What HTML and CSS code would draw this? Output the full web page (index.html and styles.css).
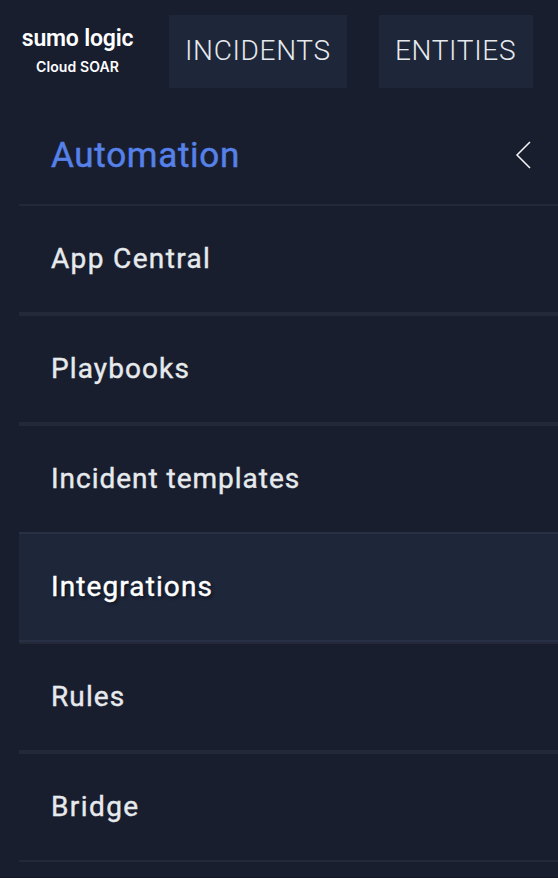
FILE: index.html
```html
<!DOCTYPE html>
<html lang="en">
<head>
<meta charset="utf-8">
<title>Cloud SOAR</title>
<link rel="stylesheet" href="styles.css">
</head>
<body>
<header class="topbar">
  <div class="brand"><span class="brand-name">sumo logic</span><span class="brand-product">Cloud SOAR</span></div>
  <nav class="tabs"><a class="tab tab-incidents">INCIDENTS</a><a class="tab tab-entities">ENTITIES</a></nav>
</header>
<main class="menu">
  <div class="menu-header">
    <h1 class="menu-title">Automation</h1>
    <svg class="back" viewBox="0 0 18 28" aria-hidden="true"><path d="M16 1 3 14 16 27"/></svg>
  </div>
  <ul class="items">
    <li class="item"><span class="label app-central">App Central</span></li>
    <li class="item"><span class="label playbooks">Playbooks</span></li>
    <li class="item"><span class="label templates">Incident templates</span></li>
    <li class="item active"><span class="label integrations">Integrations</span></li>
    <li class="item"><span class="label rules">Rules</span></li>
    <li class="item"><span class="label bridge">Bridge</span></li>
  </ul>
</main>
</body>
</html>
```
FILE: styles.css
```css
* { box-sizing: border-box; }
body { margin: 0; height: 878px; overflow: hidden; background: #191e2f; color: #e6eaed; font-family: Roboto, "Liberation Sans", sans-serif; border-bottom: 1px solid #151827; }
.topbar { display: flex; align-items: flex-start; height: 109px; padding: 15px 25px 0 22px; }
.brand { width: 111px; margin-right: 36px; padding-top: 9px; display: flex; flex-direction: column; align-items: center; color: #fff; white-space: nowrap; }
.brand-name { font-size: 23px; line-height: 30px; font-weight: 600; letter-spacing: -0.2px; }
.brand-product { font-family: Inter, sans-serif; font-size: 14px; line-height: 20px; font-weight: 600; margin-top: 3px; letter-spacing: 0.1px; }
.tabs { display: flex; gap: 32px; }
.tab { height: 73px; padding-left: 16px; background: #1e263a; font-size: 28px; line-height: 72px; font-weight: 300; letter-spacing: 0.65px; white-space: nowrap; }
.tab-incidents { width: 178px; }
.tab-entities { width: 154px; }
.menu { margin-left: 19px; }
.menu-header { display: flex; align-items: center; justify-content: space-between; height: 97px; padding: 0 26px 4px 32px; border-bottom: 2px solid #24293a; }
.menu-title { margin: 0; padding-top: 3px; color: #5581e8; font-size: 35px; line-height: 44px; font-weight: 400; -webkit-text-stroke: 0.5px; letter-spacing: 0.7px; }
.back { width: 18px; height: 28px; fill: none; stroke: #f4f6f8; stroke-width: 1.5; }
.items { margin: 0; padding: 0; list-style: none; }
.item { height: 110px; padding: 31px 0 0 32px; border-bottom: 4px solid #24293a; font-size: 28px; line-height: 44px; font-weight: 400; -webkit-text-stroke: 0.4px; letter-spacing: 1.1px; }
.app-central { letter-spacing: 1.35px; }
.templates { letter-spacing: 0.98px; }
.bridge { letter-spacing: 1.4px; }
.item:nth-child(3) { height: 108px; border-bottom: 2px solid #273044; }
.item.active { background: #1e263a; color: #fff; text-shadow: 2px 2px 3px #101522; border-bottom: 2px solid #24293a; box-shadow: inset 0 -2px #273044; }
.item:last-child { border-bottom-width: 2px; height: 108px; }
```
